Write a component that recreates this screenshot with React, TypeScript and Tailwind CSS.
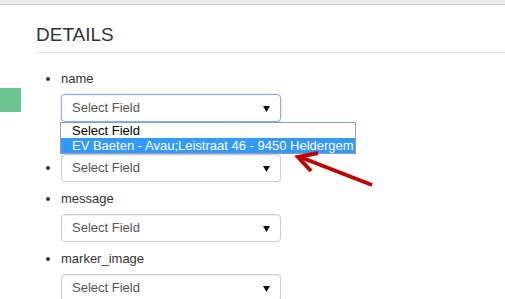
import React from "react";

const Arrow = () => (
  <svg width="7" height="7" viewBox="0 0 7 7" className="shrink-0">
    <polygon points="0,1 7,1 3.5,7" fill="#111" />
  </svg>
);

function SelectBox({ focused = false }: { focused?: boolean }) {
  return (
    <div
      className={
        "flex h-[28px] w-[220px] items-center justify-between rounded-[4px] border bg-white pl-[10px] pr-[10px] text-[13px] text-[#555] " +
        (focused
          ? "border-[#80aef0] shadow-[0_0_2px_rgba(102,175,233,0.6)]"
          : "border-[#cccccc] shadow-[inset_0_1px_1px_rgba(0,0,0,0.075)]")
      }
    >
      <span>Select Field</span>
      <Arrow />
    </div>
  );
}

const items = ["name", "", "message", "marker_image"];

export default function App() {
  return (
    <div
      className="relative h-[299px] w-[505px] overflow-hidden bg-white text-[#333]"
      style={{ fontFamily: '"Liberation Sans", Arial, sans-serif' }}
    >
      <div className="h-[4px] border-b border-[#d4d4d4] bg-[#ececec] box-content" />
      <div className="flex">
        <div className="w-[36px] shrink-0">
          <div className="mt-[83px] h-[24px] w-[21px] bg-[#6dc48e]" />
        </div>
        <div className="flex-1">
          <div className="mt-[18px] border-b border-[#e5e5e5] pb-[5px]">
            <h3 className="h-[24px] text-[19px] leading-[24px] text-[#333]">DETAILS</h3>
          </div>
          <ul className="mt-[16px] list-disc pl-[25px] text-[13px] leading-[20px]">
            {items.map((label, i) => (
              <li key={i} className="relative h-[60px]">
                <div className="h-[20px]">{label}</div>
                <div className="mt-[5px]">
                  <SelectBox focused={i === 0} />
                </div>
                {i === 0 && (
                  <div className="absolute left-[-1px] top-[53px] z-10 w-[296px] border border-[#8a9fbf] bg-white text-[13px] leading-[15px] text-black">
                    <div className="h-[15px] pl-[11px]">Select Field</div>
                    <div className="h-[15px] whitespace-nowrap bg-[#3399ff] pl-[11px] text-white">
                      EV Baeten - Avau;Leistraat 46 - 9450 Heldergem
                    </div>
                  </div>
                )}
              </li>
            ))}
          </ul>
        </div>
      </div>
      <svg className="pointer-events-none absolute left-0 top-0 z-20" width="505" height="299">
        <line x1="372" y1="185" x2="300" y2="157" stroke="#c00000" strokeWidth="4" />
        <polyline
          points="318,153 298,157 311,171"
          fill="none"
          stroke="#c00000"
          strokeWidth="4"
          strokeLinejoin="miter"
        />
      </svg>
    </div>
  );
}
